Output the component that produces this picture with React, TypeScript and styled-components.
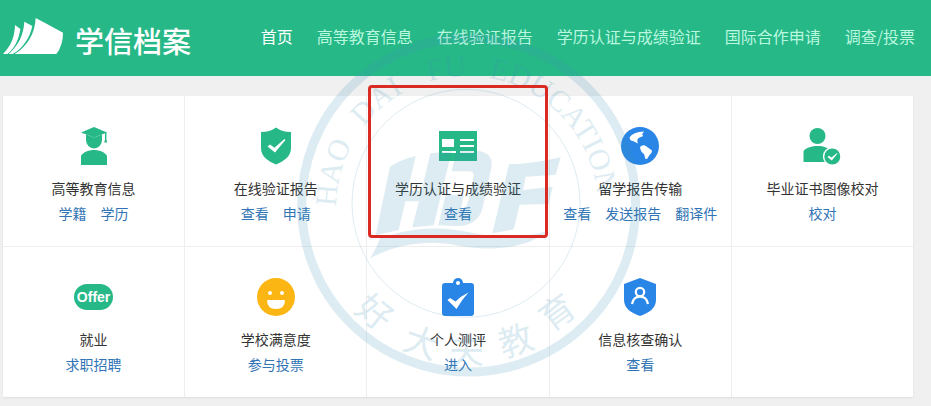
import React from "react";
import styled, { createGlobalStyle } from "styled-components";

const GREEN = "#27b888";
const BLUE = "#2a86e6";
const YELLOW = "#fcb614";

const GlobalStyle = createGlobalStyle`
  *, *::before, *::after { box-sizing: border-box; }
  body {
    margin: 0;
    background: #f0f0f0;
    color: #333;
    font-family: "Noto Sans CJK SC", "Liberation Sans", sans-serif;
    font-size: 14px;
  }
  a { text-decoration: none; }
`;

const Page = styled.div`
  position: relative;
  overflow: hidden;
  padding-bottom: 9px;
`;

const Header = styled.header`
  display: flex;
  align-items: center;
  justify-content: space-between;
  height: 76px;
  padding: 0 16px 4px 3px;
  background: ${GREEN};
`;

const Brand = styled.a`
  display: flex;
  align-items: flex-end;
  gap: 12px;
  color: #fff;
`;

const BrandName = styled.span`
  font-size: 29px;
  line-height: 28px;
  font-weight: 500;
`;

const Nav = styled.nav`
  display: flex;
  gap: 24px;
`;

const NavLink = styled.a<{ $active?: boolean }>`
  color: ${(p) => (p.$active ? "#fff" : "#b9f7df")};
  font-size: 16px;
  line-height: 24px;
  white-space: nowrap;
`;

const Card = styled.main`
  display: grid;
  grid-template-columns: repeat(5, 1fr);
  gap: 1px;
  margin: 20px 18px 0 3px;
  background: #eee;
  box-shadow: 0 1px 2px rgba(0, 0, 0, 0.08);
`;

const Cell = styled.section`
  position: relative;
  display: flex;
  flex-direction: column;
  align-items: center;
  min-height: 150px;
  padding: 30px 0 20px;
  background: #fff;
`;

const IconSlot = styled.div`
  display: flex;
  align-items: center;
  justify-content: center;
  height: 40px;
`;

const Title = styled.h2`
  margin: 10px 0 1px;
  font-size: 14px;
  font-weight: 400;
  line-height: 24px;
  white-space: nowrap;
`;

const Links = styled.div`
  display: flex;
  gap: 14px;
`;

const ActionLink = styled.a`
  color: #3174b5;
  line-height: 24px;
  white-space: nowrap;
`;

const Highlight = styled.div`
  position: absolute;
  z-index: 2;
  inset: -11px 1px 8px 1px;
  border: 3px solid #d92b23;
  border-radius: 4px;
  pointer-events: none;
`;

const OfferBadge = styled.span`
  padding: 0 3px;
  border-radius: 13px;
  background: ${GREEN};
  color: #fff;
  font: bold 14px/26px "Liberation Sans", sans-serif;
`;

const Seal = styled.svg`
  position: absolute;
  z-index: 1;
  top: 30px;
  left: 50%;
  width: 350px;
  height: 350px;
  margin-left: -174px;
  opacity: 0.17;
  pointer-events: none;
`;

const LogoMark = () => (
  <svg width="60" height="36" viewBox="9 54 180 108" fill="#fff" aria-hidden="true">
    <path d="M45 75 61 87C57 117 45 145 22 162H9C34 137 44 110 45 75Z" />
    <path d="M73 65 97 78C89 114 69 145 38 162H26C55 137 71 104 73 65Z" />
    <path d="M107 54Q147 75 189 98Q189 136 169 162H44C82 139 105 101 107 54Z" />
  </svg>
);

const GraduateIcon = () => (
  <svg width="28" height="40" viewBox="0 0 28 40" fill={GREEN} aria-hidden="true">
    <path d="M14 1 27 6.500 14 11.500 1 6.500Z" />
    <path d="M6 8.500 14 11.500 22 8.500V14a8 8.500 0 0 1-16 0Z" />
    <path d="M25 6h1.400v7.500l.8 3h-3l.8-3Z" />
    <path d="M1 39V30C3 26 9 24 14 24s11 2 13 6v9Z" />
  </svg>
);

const ShieldCheckIcon = () => (
  <svg width="32" height="40" viewBox="0 0 32 40" aria-hidden="true">
    <path fill={GREEN} d="M16 1.500Q22 6 31 6v16c0 9-8 13.500-15 16.500C9 35.500 1 31 1 22V6Q10 6 16 1.500Z" />
    <path fill="#fff" d="M7.500 20.500 10 18.500l4.500 3.300L24.500 13l.9.900L15 26.600Z" />
  </svg>
);

const IdCardIcon = () => (
  <svg width="38" height="30" viewBox="0 0 38 30" aria-hidden="true">
    <path fill={GREEN} d="M0 0h38v30H0z" />
    <path fill="#fff" d="M3 8h12v8H3zM3 20h14v2H3zM21 8h14v2H21zM21 14h14v2H21zM21 20h14v2H21z" />
  </svg>
);

const GlobeIcon = () => (
  <svg width="38" height="38" viewBox="0 0 38 38" aria-hidden="true">
    <circle cx="19" cy="19" r="19" fill={BLUE} />
    <path fill="#fff" d="M8.500 10.500Q12 5 23 4.500L21 7.500Q24 9 18.500 10.500Q15 12 17 16.500L12 14Q9 14 8.500 10.500Z" />
    <path fill="#fff" d="M19 20q3-3 6.500-.500L31 23.500q0 3-2.500 4.500L26 32h-1.500L23 27q-3.500-2-4-7Z" />
  </svg>
);

const PersonCheckIcon = () => (
  <svg width="38" height="40" viewBox="0 0 38 40" aria-hidden="true">
    <g fill={GREEN}>
      <circle cx="14.500" cy="10" r="8" />
      <path d="M.5 36V25C3 21.500 9 20 14.500 20c6 0 11.500 2 14 5.500V36Z" />
      <circle cx="29.300" cy="30.500" r="8.700" stroke="#fff" strokeWidth="1.400" />
    </g>
    <path fill="#fff" d="m24.500 31 1.500-1.200 2.500 1.700 5.500-4.500.5.500-5.700 7Z" />
  </svg>
);

const SmileIcon = () => (
  <svg width="38" height="38" viewBox="0 0 38 38" aria-hidden="true">
    <circle cx="19" cy="19" r="19" fill={YELLOW} />
    <g fill="#fff">
      <circle cx="13" cy="15" r="2" />
      <circle cx="25" cy="15" r="2" />
      <path d="M10 22h18q0 9-9 9t-9-9Z" />
    </g>
  </svg>
);

const ClipboardIcon = () => (
  <svg width="32" height="38" viewBox="0 0 32 38" aria-hidden="true">
    <rect y="5" width="32" height="33" rx="3" fill={BLUE} />
    <circle cx="16" cy="5" r="5" fill={BLUE} />
    <circle cx="16" cy="5" r="2" fill="#fff" />
    <path fill="#fff" d="M5.500 22 8 20l5.500 3.500Q19 18 26.500 14.500 19.500 22 14.500 31Z" />
  </svg>
);

const ShieldPersonIcon = () => (
  <svg width="32" height="38" viewBox="0 0 32 38" aria-hidden="true">
    <path fill={BLUE} d="M16 0 32 6v16c0 8-7 13-16 16C7 35 0 30 0 22V6Z" />
    <g fill="none" stroke="#fff" strokeWidth="2.200">
      <circle cx="16" cy="14" r="4.200" />
      <path d="M8 26c1-5 4-7.300 8-7.300s7 2.300 8 7.300" />
    </g>
  </svg>
);

const sealWords = [
  { text: "HAO", offset: 0 },
  { text: "DAI", offset: 258 },
  { text: "FU", offset: 500 },
  { text: "EDUCATION", offset: 680 },
];

const sealGlyphs = [
  { text: "好", x: 270, y: 845, turn: 38 },
  { text: "大", x: 410, y: 935, turn: 19 },
  { text: "夫", x: 545, y: 958, turn: 0 },
  { text: "教", x: 692, y: 930, turn: -18 },
  { text: "育", x: 815, y: 845, turn: -36 },
];

const Watermark = () => (
  <Seal viewBox="21 0 1050 1050" aria-hidden="true">
    <defs>
      <path id="seal-arc" d="M154 530A392 392 0 0 1 938 530" />
    </defs>
    <g fill="none" stroke="#3a92b5">
      <circle cx="551" cy="525" r="501" strokeWidth="27" />
      <circle cx="543" cy="520" r="342" strokeWidth="3" />
    </g>
    <g fill="#3a92b5">
      <g fontFamily="Liberation Serif, serif" fontSize="90">
        {sealWords.map((w) => (
          <text key={w.text}>
            <textPath href="#seal-arc" startOffset={w.offset}>{w.text}</textPath>
          </text>
        ))}
      </g>
      <g fontSize="104" fontWeight="400" textAnchor="middle">
        {sealGlyphs.map((g) => (
          <text key={g.text} transform={`translate(${g.x} ${g.y}) rotate(${g.turn})`} y="40">
            {g.text}
          </text>
        ))}
      </g>
      <path d="M315 410Q348 388 392 378L368 482H410L436 370L500 364 446 586 382 592 402 514H361L341 600 272 616Z" />
      <path d="M514 364H585Q628 372 618 418L592 536Q578 586 520 588L460 586 482 494H536L528 536Q544 536 548 518L566 440Q568 424 552 424H500Z" />
      <path d="M672 403Q745 402 827 382L812 434 722 440 714 480 803 470 791 522 704 524 686 598 622 610Z" />
      <path d="M285 625C400 585 480 592 560 608C650 626 730 622 790 602C720 660 600 665 510 645C420 628 330 645 255 685Q275 655 285 625Z" />
    </g>
  </Seal>
);

const navItems = ["首页", "高等教育信息", "在线验证报告", "学历认证与成绩验证", "国际合作申请", "调查/投票"];

type Service = {
  title: string;
  icon: React.ReactNode;
  links: string[];
  highlighted?: boolean;
};

const services: Service[] = [
  { title: "高等教育信息", icon: <GraduateIcon />, links: ["学籍", "学历"] },
  { title: "在线验证报告", icon: <ShieldCheckIcon />, links: ["查看", "申请"] },
  { title: "学历认证与成绩验证", icon: <IdCardIcon />, links: ["查看"], highlighted: true },
  { title: "留学报告传输", icon: <GlobeIcon />, links: ["查看", "发送报告", "翻译件"] },
  { title: "毕业证书图像校对", icon: <PersonCheckIcon />, links: ["校对"] },
  { title: "就业", icon: <OfferBadge>Offer</OfferBadge>, links: ["求职招聘"] },
  { title: "学校满意度", icon: <SmileIcon />, links: ["参与投票"] },
  { title: "个人测评", icon: <ClipboardIcon />, links: ["进入"] },
  { title: "信息核查确认", icon: <ShieldPersonIcon />, links: ["查看"] },
];

export default function App() {
  return (
    <Page>
      <GlobalStyle />
      <Header>
        <Brand href="#">
          <LogoMark />
          <BrandName>学信档案</BrandName>
        </Brand>
        <Nav>
          {navItems.map((item, i) => (
            <NavLink key={item} href="#" $active={i === 0}>{item}</NavLink>
          ))}
        </Nav>
      </Header>
      <Card>
        {services.map((s) => (
          <Cell key={s.title}>
            <IconSlot>{s.icon}</IconSlot>
            <Title>{s.title}</Title>
            <Links>
              {s.links.map((l) => (
                <ActionLink key={l} href="#">{l}</ActionLink>
              ))}
            </Links>
            {s.highlighted && <Highlight />}
          </Cell>
        ))}
        <Cell />
      </Card>
      <Watermark />
    </Page>
  );
}
